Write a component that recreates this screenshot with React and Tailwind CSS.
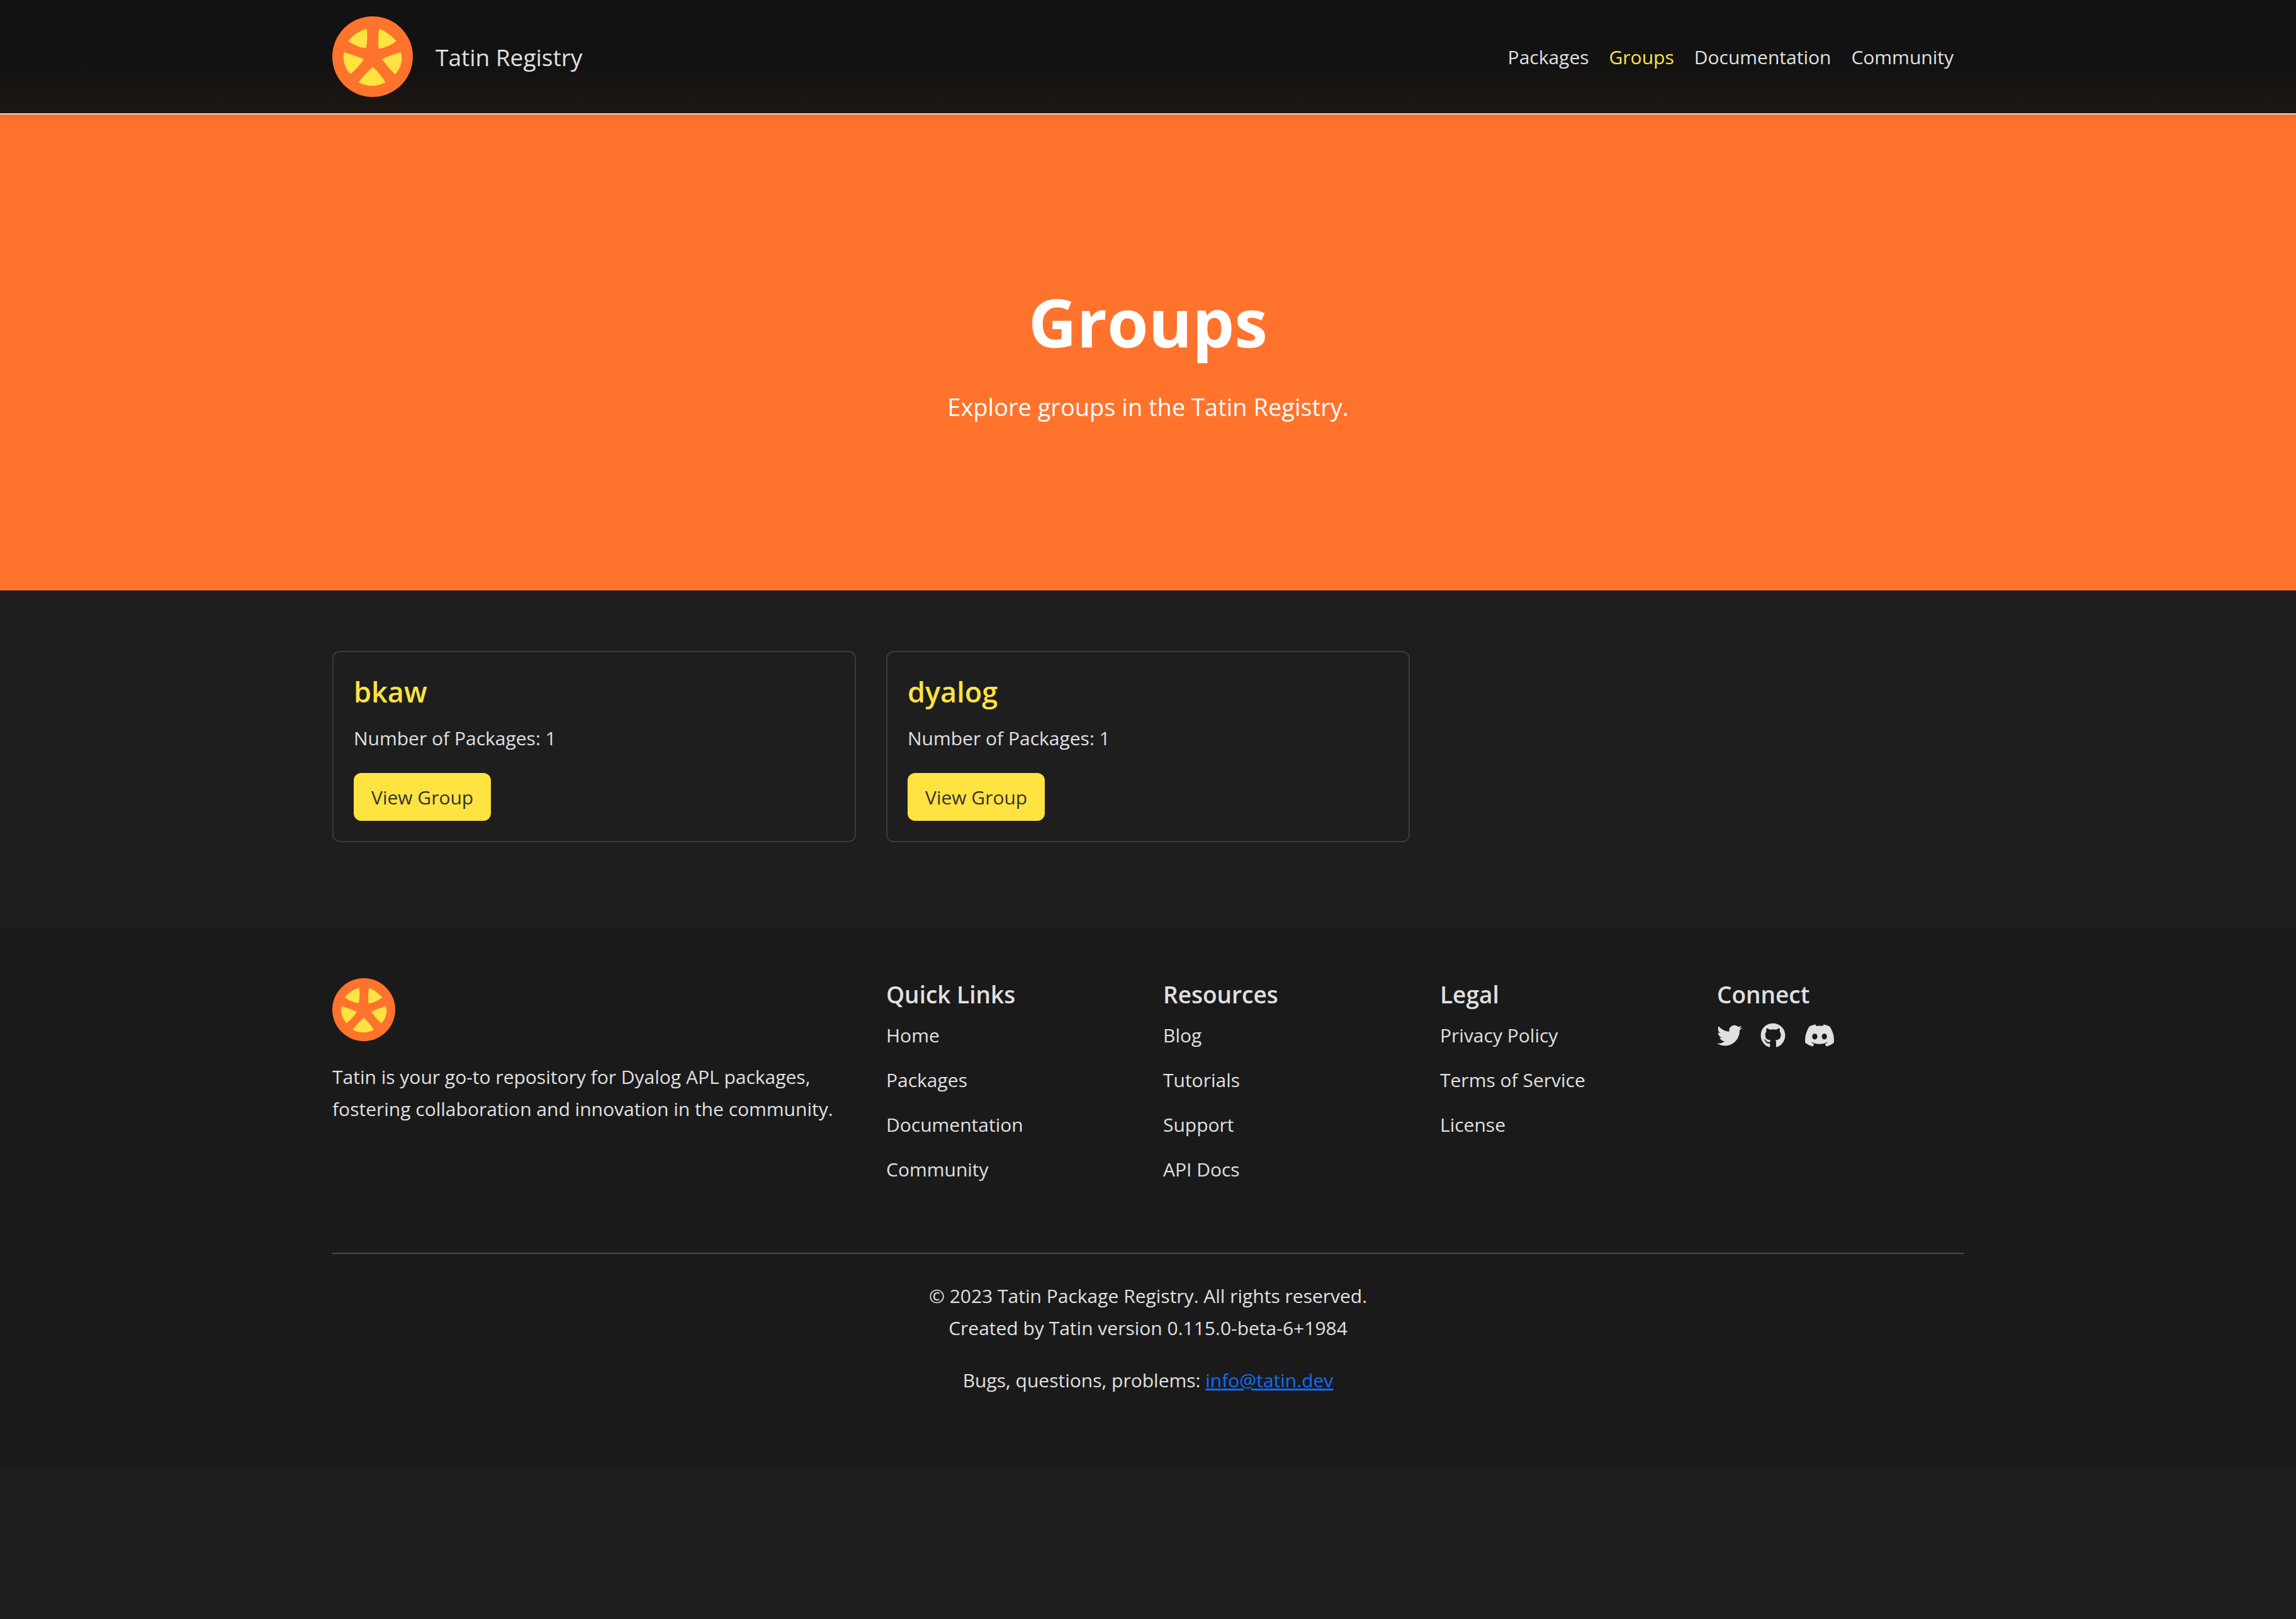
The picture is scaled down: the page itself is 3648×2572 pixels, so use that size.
import { FaTwitter, FaGithub, FaDiscord } from "react-icons/fa";

const navLinks = ["Packages", "Groups", "Documentation", "Community"];

const groups = [
  { name: "bkaw", packages: 1 },
  { name: "dyalog", packages: 1 },
];

const footerColumns = [
  { title: "Quick Links", links: ["Home", "Packages", "Documentation", "Community"] },
  { title: "Resources", links: ["Blog", "Tutorials", "Support", "API Docs"] },
  { title: "Legal", links: ["Privacy Policy", "Terms of Service", "License"] },
];

const socials = [
  { label: "Twitter", Icon: FaTwitter, size: "h-10 w-10" },
  { label: "GitHub", Icon: FaGithub, size: "h-10 w-10" },
  { label: "Discord", Icon: FaDiscord, size: "h-10 w-[50px]" },
];

function Logo({ className }) {
  return (
    <svg viewBox="0 0 128 128" className={className} role="img" aria-label="Tatin logo">
      <circle cx="64" cy="64" r="64" fill="#ff732d" />
      <g fill="#ffe341">
        <path d="M54.500 19.500Q38 24 25 39Q38 48.500 53.500 51Q57 35 54.500 19.500Z" />
        <path d="M74.500 19.500Q90 26 101.500 39Q90 49 73.500 51.500Q72 36 74.500 19.500Z" />
        <path d="M18.500 57Q34 61 50 68Q42 81 28.700 91.500Q15 76 18.500 57Z" />
        <path d="M109 57Q93 61 79 68Q88 81 99.700 92Q114 76 109 57Z" />
        <path d="M64.300 80.300Q53 90 41.500 104.500Q63 116 84.500 104.800Q76 91 64.300 80.300Z" />
      </g>
    </svg>
  );
}

function Container({ className = "", children }) {
  return <div className={`mx-auto w-full max-w-[2640px] px-6 ${className}`}>{children}</div>;
}

export default function App() {
  return (
    <div className="min-h-screen bg-[#1e1e1e] font-['Open_Sans','Noto_Sans',sans-serif] text-[30px] leading-[51px] text-[#e0e0e0]">
      <header className="relative z-10 border-b-2 border-[#dee2e6] bg-linear-to-b from-[#121212] from-60% to-[#1e1712] shadow-[0_4px_12px_rgba(0,0,0,0.1)]">
        <Container className="flex items-center justify-between py-[26px]">
          <a href="#home" className="flex items-center gap-9 text-[37px]">
            <Logo className="size-32" />
            Tatin Registry
          </a>
          <nav className="flex gap-8 px-4">
            {navLinks.map((label) => (
              <a
                key={label}
                href={`#${label.toLowerCase()}`}
                aria-current={label === "Groups" ? "page" : undefined}
                className={label === "Groups" ? "text-[#ffe341]" : ""}
              >
                {label}
              </a>
            ))}
          </nav>
        </Container>
      </header>

      <section className="bg-[#ff732d] pt-[262px] pb-[260px] text-center text-white">
        <h1 className="text-[106px] leading-[134px] font-bold">Groups</h1>
        <p className="mt-9 text-[38px] leading-[64px]">Explore groups in the Tatin Registry.</p>
      </section>

      <main>
        <Container className="grid grid-cols-3 gap-12 pt-24 pb-[136px]">
          {groups.map((group) => (
            <article key={group.name} className="rounded-xl border-2 border-[#3a3a3a] p-8">
              <h2 className="text-[45px] leading-[62px] font-semibold text-[#ffe341]">{group.name}</h2>
              <p className="mt-[17px]">Number of Packages: {group.packages}</p>
              <button
                type="button"
                className="mt-[30px] flex h-[76px] items-center rounded-xl bg-[#ffe341] px-7 text-[#333333]"
              >
                View Group
              </button>
            </article>
          ))}
        </Container>
      </main>

      <footer className="bg-[#1a1a1a] pt-20 pb-28">
        <Container>
          <div className="grid grid-cols-6 gap-x-12">
            <div className="col-span-2">
              <Logo className="size-[100px]" />
              <p className="mt-[31px]">
                Tatin is your go-to repository for Dyalog APL packages, fostering collaboration and innovation in the
                community.
              </p>
            </div>
            {footerColumns.map((column) => (
              <div key={column.title}>
                <h3 className="text-[37px] leading-[51px] font-semibold">{column.title}</h3>
                <ul className="mt-[14px] flex flex-col gap-5">
                  {column.links.map((link) => (
                    <li key={link}>
                      <a href={`#${link.toLowerCase().replaceAll(" ", "-")}`}>{link}</a>
                    </li>
                  ))}
                </ul>
              </div>
            ))}
            <div>
              <h3 className="text-[37px] leading-[51px] font-semibold">Connect</h3>
              <div className="mt-[14px] flex h-[51px] items-center gap-[29px]">
                {socials.map(({ label, Icon, size }) => (
                  <a key={label} href={`#${label.toLowerCase()}`} aria-label={label}>
                    <Icon className={size} />
                  </a>
                ))}
              </div>
            </div>
          </div>
          <hr className="mt-[107px] border-t-2 border-[#4a4a4a]" />
          <div className="mt-[41px] text-center">
            <p>© 2023 Tatin Package Registry. All rights reserved.</p>
            <p>Created by Tatin version 0.115.0-beta-6+1984</p>
            <p className="mt-8">
              Bugs, questions, problems:{" "}
              <a href="mailto:info@tatin.dev" className="text-[#0d6efd] underline">
                info@tatin.dev
              </a>
            </p>
          </div>
        </Container>
      </footer>
    </div>
  );
}
